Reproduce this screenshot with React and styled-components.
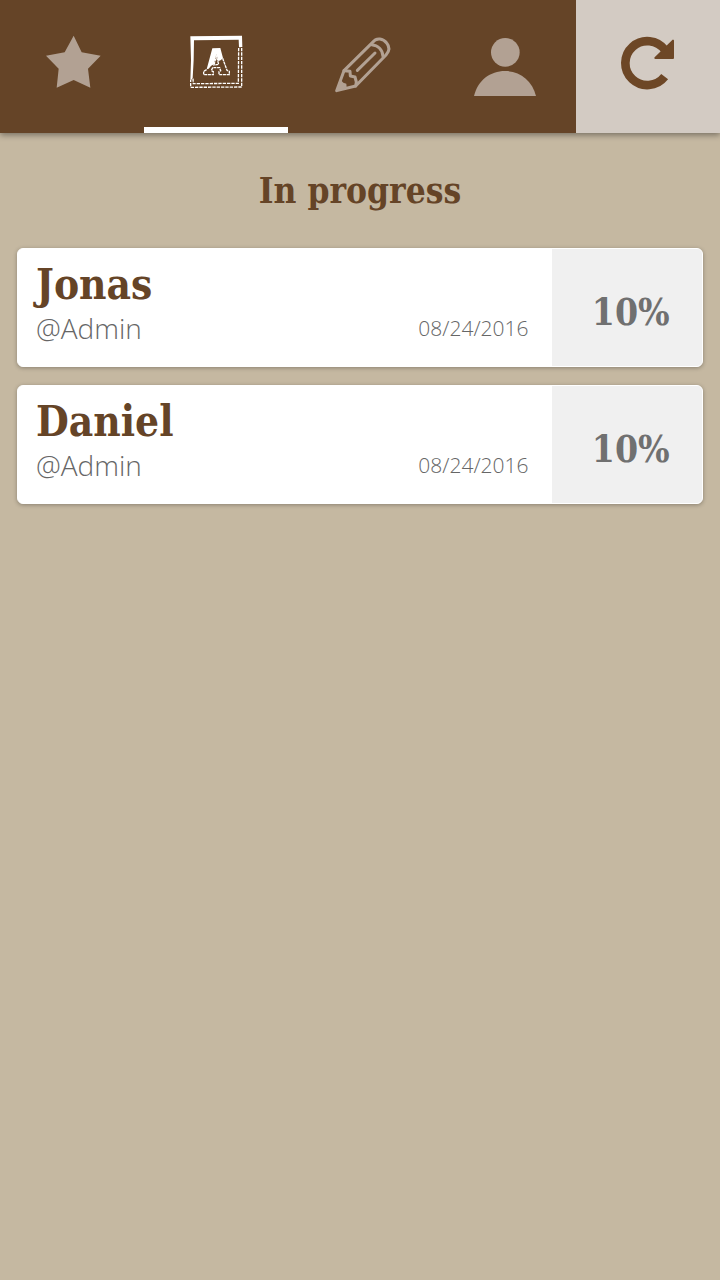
import React, { useState } from 'react'
import styled, { createGlobalStyle } from 'styled-components'


const games = [
    { id: 1, name: 'Jonas', owner: '@Admin', date: '08/24/2016', progress: '10%' },
    { id: 2, name: 'Daniel', owner: '@Admin', date: '08/24/2016', progress: '10%' },
]

const StarIcon = () => (
    <Icon viewBox="6 12 240 240">
        <path fill="currentColor" d="M131 47L155 97L212 107L174 146L181 203L131 180L80 203L86 146L48 107L104 97Z" />
    </Icon>
)

const LetterIcon = () => (
    <Icon viewBox="3 12 240 240">
        <path fill="currentColor" d="M46 49L201 47L202 81L192 82L191 59L57 61L56 120L53 174L46 184L48 120Z" />
        <g fill="none" stroke="currentColor" strokeWidth="4" strokeDasharray="10 3">
            <path d="M191 84L190 190L55 191L54 176" />
            <path d="M200 84V201L47 202V180" />
        </g>
        <path fill="currentColor" fillRule="evenodd" d="M112 85L136 84L144 114Q139 121 130 124L124 102L117 133Q108 135 101 146L95 148Z" />
        <g fill="none" stroke="currentColor" strokeWidth="4" strokeDasharray="9 2">
            <path d="M143 115L156 151L163 154V164H132V155L137 152L134 143H113L109 152L115 155V164H86V154L95 149" />
            <path d="M117 135L124 108L131 133Z" />
        </g>
    </Icon>
)

const PencilIcon = () => (
    <Icon viewBox="0 12 240 240">
        <g fill="none" stroke="currentColor" strokeWidth="9" strokeLinejoin="round" strokeLinecap="round">
            <path d="M50 212L72 152L157 68C170 50 190 56 200 69C210 81 208 94 198 105L107 198Z" />
            <path d="M155 74C174 76 188 89 189 109" />
            <path d="M72 152L90 154L91 168L105 171L109 186L107 198" />
            <path d="M112 151L165 99" />
        </g>
        <path fill="currentColor" d="M63 181L70 188L79 191L80 202L49 214Z" />
    </Icon>
)

const UserIcon = () => (
    <Icon viewBox="12 12 240 240">
        <circle fill="currentColor" cx="136" cy="97" r="43" />
        <path fill="currentColor" d="M42 228C53 181 91 153 135 153S217 181 228 228Z" />
    </Icon>
)

const ReloadIcon = () => (
    <Icon viewBox="114 12 240 240">
        <path fill="none" stroke="currentColor" strokeWidth="26" d="M285 90A66 66 0 1 0 284 170" />
        <path fill="currentColor" stroke="currentColor" strokeWidth="6" strokeLinejoin="round" d="M309 62V114H256Z" />
    </Icon>
)

const tabs = [
    { id: 'favorites', label: 'Favorites', icon: <StarIcon /> },
    { id: 'games', label: 'Games', icon: <LetterIcon /> },
    { id: 'edit', label: 'Edit', icon: <PencilIcon /> },
    { id: 'profile', label: 'Profile', icon: <UserIcon /> },
]

const App = () => {
    const [active, setActive] = useState('games')

    return (
        <>
            <GlobalStyle />
            <Navbar>
                {tabs.map((tab) => (
                    <Tab
                        key={tab.id}
                        aria-label={tab.label}
                        $active={tab.id === active}
                        onClick={() => setActive(tab.id)}
                    >
                        {tab.icon}
                    </Tab>
                ))}
                <Reload aria-label="Reload">
                    <ReloadIcon />
                </Reload>
            </Navbar>
            <Main>
                <Title>In progress</Title>
                <List>
                    {games.map((game) => (
                        <Card key={game.id}>
                            <Info>
                                <Name>{game.name}</Name>
                                <Details>
                                    <Owner>{game.owner}</Owner>
                                    <Day>{game.date}</Day>
                                </Details>
                            </Info>
                            <Progress>{game.progress}</Progress>
                        </Card>
                    ))}
                </List>
            </Main>
        </>
    )
}

export default App


const slab = '"Roboto Slab", "DejaVu Serif Condensed", "DejaVu Serif", serif'

const GlobalStyle = createGlobalStyle`
    * {
        box-sizing: border-box;
    }

    body {
        margin: 0;
        background-color: #c5b8a1;
        color: #666;
        font-family: "Open Sans", sans-serif;
    }
`

const Navbar = styled.nav`
    display: flex;
    background-color: #654427;
    box-shadow: 0 2px 6px rgba(0,0,0,0.4);
`

const Tab = styled.button`
    flex: 1;
    display: flex;
    align-items: center;
    justify-content: center;
    padding: 24px 0 23px;
    border: 0;
    border-bottom: 6px solid ${({ $active }) => ($active ? '#fff' : 'transparent')};
    background-color: transparent;
    color: ${({ $active }) => ($active ? '#fff' : '#b2a193')};
    cursor: pointer;
`

const Reload = styled(Tab)`
    border-bottom-color: #d3cbc3;
    background-color: #d3cbc3;
    color: #6d4726;
`

const Icon = styled.svg`
    display: block;
    width: 80px;
    height: 80px;
`

const Main = styled.main`
    padding: 32px 17px;
`

const Title = styled.h1`
    margin: 0 0 31px;
    color: #654427;
    font-family: ${slab};
    font-size: 35px;
    font-weight: 700;
    line-height: 52px;
    text-align: center;
`

const List = styled.ul`
    display: flex;
    flex-direction: column;
    gap: 18px;
    margin: 0;
    padding: 0;
    list-style: none;
`

const Card = styled.li`
    display: flex;
    border: 1px solid #fff;
    border-radius: 6px;
    background-color: #fff;
    box-shadow: 0 1px 4px rgba(0,0,0,0.3);
    overflow: hidden;
`

const Info = styled.div`
    flex: 1;
    padding: 12px 23px 19px 18px;
`

const Name = styled.h2`
    margin: 0;
    color: #654427;
    font-family: ${slab};
    font-size: 42px;
    font-weight: 700;
    line-height: 48px;
`

const Details = styled.div`
    display: flex;
    align-items: center;
    justify-content: space-between;
    font-weight: 300;
    line-height: 38px;
`

const Owner = styled.span`
    font-size: 28px;
`

const Day = styled.time`
    font-size: 21px;
`

const Progress = styled.div`
    display: flex;
    align-items: center;
    justify-content: center;
    width: 22%;
    padding: 8px 0 0 8px;
    background-color: #f0f0f0;
    color: #707070;
    font-family: ${slab};
    font-size: 37px;
    font-weight: 700;
`
